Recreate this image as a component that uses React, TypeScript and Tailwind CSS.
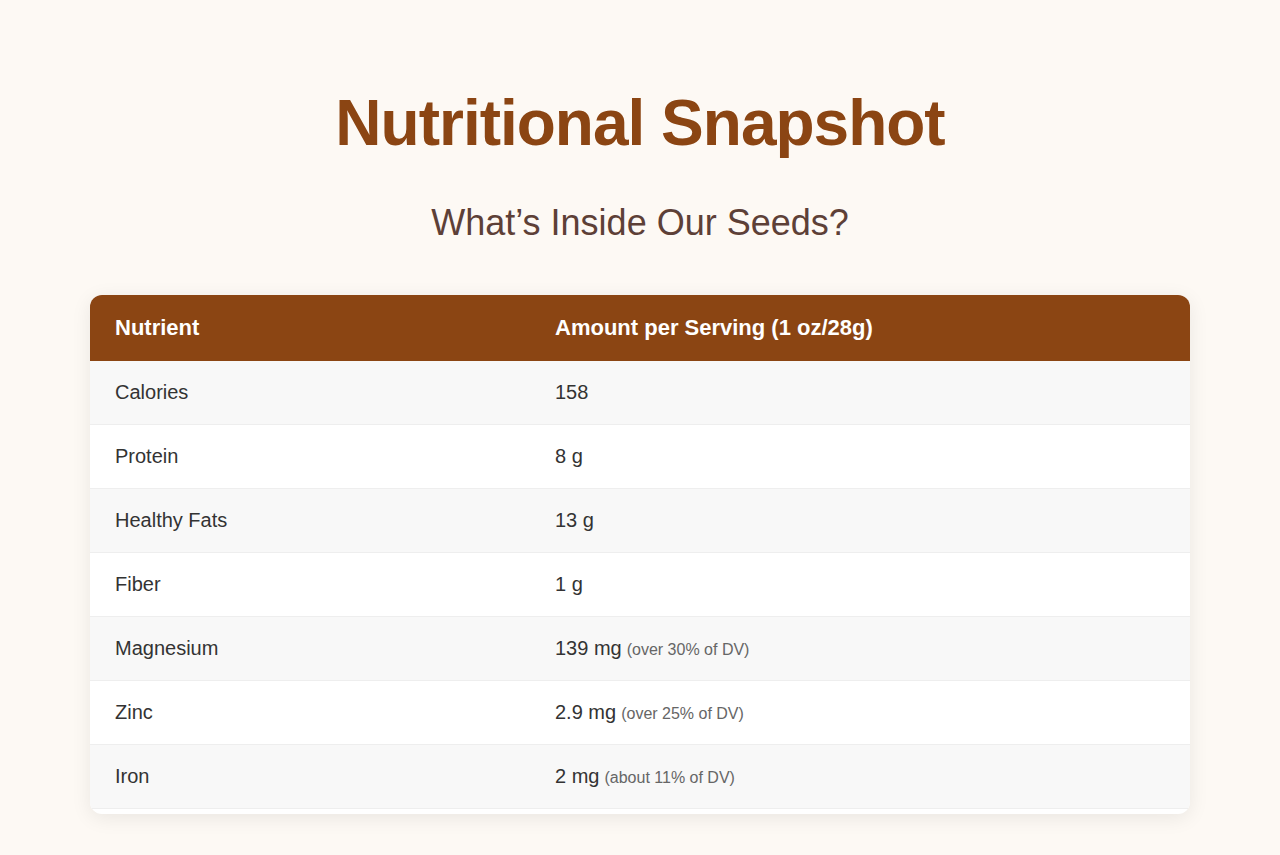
import React from "react";

const rows: { name: string; amount: string; note?: string }[] = [
  { name: "Calories", amount: "158" },
  { name: "Protein", amount: "8 g" },
  { name: "Healthy Fats", amount: "13 g" },
  { name: "Fiber", amount: "1 g" },
  { name: "Magnesium", amount: "139 mg", note: "(over 30% of DV)" },
  { name: "Zinc", amount: "2.9 mg", note: "(over 25% of DV)" },
  { name: "Iron", amount: "2 mg", note: "(about 11% of DV)" },
];

const App: React.FC = () => {
  return (
    <div className="min-h-[855px] bg-[#fdf9f4] font-['Liberation_Sans',Arial,sans-serif] pt-[75px] pb-10">
      <div className="w-[1100px] mx-auto">
        <h1 className="text-center text-[64px] leading-normal font-bold tracking-[-1px] text-[#8b4513]">
          Nutritional Snapshot
        </h1>
        <h2 className="mt-[25px] text-center text-[36px] leading-normal text-[#5d4037]">
          What’s Inside Our Seeds?
        </h2>

        <div className="mt-[45px] bg-white rounded-xl overflow-hidden shadow-[0_4px_20px_rgba(0,0,0,0.08)] pb-[5px]">
          <table className="w-full border-collapse text-left">
            <thead>
              <tr className="bg-[#8b4513] text-white">
                <th className="w-[440px] px-[25px] py-5 text-[22px] leading-[26px] font-bold">
                  Nutrient
                </th>
                <th className="px-[25px] py-5 text-[22px] leading-[26px] font-bold">
                  Amount per Serving (1 oz/28g)
                </th>
              </tr>
            </thead>
            <tbody>
              {rows.map((r, i) => (
                <tr
                  key={r.name}
                  className={`border-b border-[#eeeeee] ${i % 2 === 0 ? "bg-[#f8f8f8]" : "bg-white"}`}
                >
                  <td className="px-[25px] py-5 text-[20px] leading-[23px] text-[#333333]">
                    {r.name}
                  </td>
                  <td className="px-[25px] py-5 text-[20px] leading-[23px] text-[#333333]">
                    {r.amount}
                    {r.note && (
                      <span className="ml-[5px] text-[16px] leading-none text-[#666666]">{r.note}</span>
                    )}
                  </td>
                </tr>
              ))}
            </tbody>
          </table>
        </div>
      </div>
    </div>
  );
};

export default App;
